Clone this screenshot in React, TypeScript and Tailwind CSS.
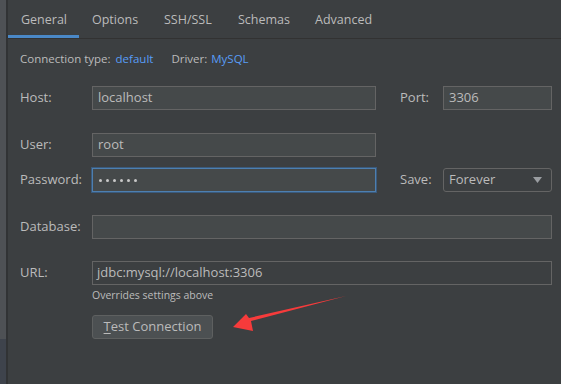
import React from "react";

const font = { fontFamily: '"Open Sans", "Liberation Sans", sans-serif' };

function Tab({ label, width, active }: { label: string; width: string; active?: boolean }) {
  return (
    <div
      className={`${width} h-[38px] flex items-center pl-[13px] pt-[6px] text-[12.5px] text-[#bbbbbb] border-b-[3px] ${
        active ? "border-[#4a88c7]" : "border-transparent"
      }`}
    >
      {label}
    </div>
  );
}

function Field({ value, className = "" }: { value?: string; className?: string }) {
  return (
    <div
      className={`h-[24px] border border-[#646464] bg-[#45494a] flex items-center px-[5px] text-[13px] text-[#bbbbbb] ${className}`}
    >
      {value}
    </div>
  );
}

function Label({ children, w = "w-[72px]" }: { children: React.ReactNode; w?: string }) {
  return <div className={`${w} shrink-0 text-[13px] text-[#bbbbbb]`}>{children}</div>;
}

export default function App() {
  return (
    <div className="w-[561px] h-[384px] flex bg-[#3c3f41] overflow-hidden" style={font}>
      <div className="w-[6px] shrink-0 flex flex-col">
        <div className="h-[339px] bg-[#4e5155]" />
        <div className="flex-1 bg-[#3e434c]" />
      </div>
      <div className="w-[2px] shrink-0 bg-[#313335]" />

      <div className="flex-1 relative">
        {/* tabs */}
        <div className="flex h-[39px] border-b border-[#323232]">
          <Tab label="General" width="w-[71px]" active />
          <Tab label="Options" width="w-[72px]" />
          <Tab label="SSH/SSL" width="w-[74px]" />
          <Tab label="Schemas" width="w-[77px]" />
          <Tab label="Advanced" width="w-[90px]" />
        </div>

        <div className="pl-[12px] pr-[9px]">
          <div className="h-[38px] flex items-center pt-[2px] text-[11.5px] text-[#bbbbbb]">
            <span>Connection type:</span>
            <span className="ml-[5px] text-[#589df6]">default</span>
            <span className="ml-[18px]">Driver:</span>
            <span className="ml-[4px] text-[#589df6]">MySQL</span>
          </div>

          {/* Host / Port */}
          <div className="mt-[9px] flex items-center">
            <Label>Host:</Label>
            <Field value="localhost" className="w-[284px]" />
            <Label w="w-[43px] ml-[24px]">Port:</Label>
            <Field value="3306" className="flex-1" />
          </div>

          {/* User */}
          <div className="mt-[23px] flex items-center">
            <Label>User:</Label>
            <Field value="root" className="w-[284px]" />
          </div>

          {/* Password / Save */}
          <div className="mt-[11px] flex items-center">
            <Label>Password:</Label>
            <div className="w-[284px] h-[24px] border border-[#4d7fb0] outline outline-1 outline-[#3a5a7c] bg-[#45494a] flex items-center gap-[4px] px-[6px]">
              {[0, 1, 2, 3, 4, 5].map((i) => (
                <span key={i} className="w-[3px] h-[3px] rounded-full bg-[#c8c8c8]" />
              ))}
            </div>
            <Label w="w-[43px] ml-[24px]">Save:</Label>
            <div className="flex-1 h-[24px] border border-[#646464] rounded-[3px] bg-[#3c3f41] flex items-center justify-between pl-[5px] pr-[9px] text-[13px] text-[#bbbbbb]">
              <span>Forever</span>
              <svg width="9" height="6" viewBox="0 0 9 6">
                <path d="M0 0 H9 L4.5 6 Z" fill="#9a9da1" />
              </svg>
            </div>
          </div>

          {/* Database */}
          <div className="mt-[23px] flex items-center">
            <Label>Database:</Label>
            <Field className="flex-1" />
          </div>

          {/* URL */}
          <div className="mt-[22px] flex items-center">
            <Label>URL:</Label>
            <div className="flex-1 h-[24px] border border-[#646464] bg-[#3c3f41] flex items-center px-[4px] text-[13px] text-[#bbbbbb]">
              jdbc:mysql://localhost:3306
            </div>
          </div>
          <div className="pl-[72px] mt-[3px] text-[10.5px] text-[#bbbbbb] leading-[14px]">
            Overrides settings above
          </div>

          <div className="pl-[72px] mt-[13px]">
            <button className="w-[121px] h-[24px] rounded-[3px] border border-[#5e6060] bg-[#4c5052] text-[13px] text-[#bbbbbb] flex items-center justify-center">
              <span className="underline underline-offset-2">T</span>est Connection
            </button>
          </div>
        </div>

        {/* annotation arrow */}
        <svg className="absolute left-0 top-0 pointer-events-none" width="553" height="384" viewBox="8 0 553 384">
          <polygon
            points="346,296 251,321 253,331 233,327 246,314 249,318"
            fill="#f63b3b"
          />
        </svg>
      </div>
    </div>
  );
}
